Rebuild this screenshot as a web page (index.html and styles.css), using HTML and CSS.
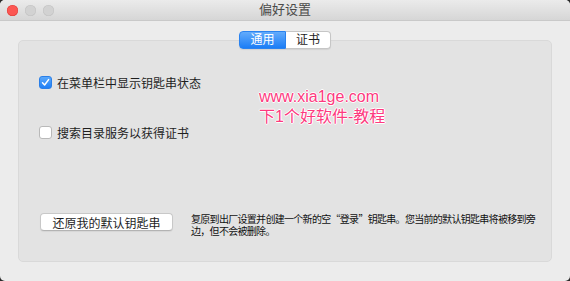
FILE: index.html
```html
<!DOCTYPE html>
<html lang="zh-CN">
<head>
    <meta charset="UTF-8">
    <title>偏好设置</title>
    <link rel="stylesheet" href="styles.css">
</head>
<body>
    <div class="window">
        <div class="titlebar">
            <div class="lights">
                <span class="light close"></span>
                <span class="light"></span>
                <span class="light"></span>
            </div>
            <div class="title">偏好设置</div>
            <div></div>
        </div>

        <div class="content">
            <div class="tabs">
                <span class="tab active">通用</span>
                <span class="tab">证书</span>
            </div>

            <div class="panel">
                <label class="row">
                    <span class="checkbox checked">
                        <svg width="9" height="9" viewBox="0 0 9 9"><path d="M1.5 4.8 L3.6 7 L7.6 1.6" fill="none" stroke="#fff" stroke-width="1.5" stroke-linecap="round" stroke-linejoin="round"/></svg>
                    </span>
                    在菜单栏中显示钥匙串状态
                </label>
                <label class="row second">
                    <span class="checkbox"></span>
                    搜索目录服务以获得证书
                </label>

                <div class="watermark">
                    <div>www.xia1ge.com</div>
                    <div>下1个好软件-教程</div>
                </div>

                <div class="reset">
                    <button class="btn">还原我的默认钥匙串</button>
                    <p class="desc">复原到出厂设置并创建一个新的空“登录”钥匙串。您当前的默认钥匙串将被移到旁边，但不会被删除。</p>
                </div>
            </div>
        </div>
    </div>
</body>
</html>
```

FILE: styles.css
```css
body {
    margin: 0;
    background: #2a2a2a;
    font-family: "Liberation Sans", "Noto Sans CJK SC", sans-serif;
    color: #1e1e1e;
}

.window {
    width: 570px;
    height: 281px;
    background: #ececec;
    border-radius: 5px;
    overflow: hidden;
    display: flex;
    flex-direction: column;
}

/* Title bar */
.titlebar {
    height: 20px;
    flex: none;
    border-bottom: 1px solid #c9c9c9;
    background: linear-gradient(#ebebeb, #d6d6d6);
    display: grid;
    grid-template-columns: 1fr auto 1fr;
    align-items: center;
}

.lights {
    display: flex;
    gap: 7px;
    padding-left: 7px;
}

.light {
    width: 11px;
    height: 11px;
    border-radius: 50%;
    background: #d2d2d2;
    box-shadow: inset 0 0 0 0.5px #c2c2c2;
}

.light.close {
    background: #fc5753;
    box-shadow: inset 0 0 0 0.5px #df3e3a;
}

.title {
    font-size: 13px;
    color: #4b4b4b;
    line-height: 20px;
}

/* Content */
.content {
    flex: 1;
    display: flex;
    flex-direction: column;
    padding: 10px 18px 19px;
}

.tabs {
    display: flex;
    justify-content: center;
    position: relative;
    z-index: 1;
    height: 18px;
}

.tab {
    width: 45px;
    height: 18px;
    box-sizing: border-box;
    font-size: 12px;
    line-height: 16px;
    text-align: center;
    background: #fff;
    border: 1px solid #c6c6c6;
    border-left: none;
    border-radius: 0 4px 4px 0;
    box-shadow: 0 1px 1px rgba(0, 0, 0, 0.08);
}

.tab.active {
    width: 47px;
    color: #fff;
    background: linear-gradient(#63abfb, #1b7df6);
    border: 1px solid #2a83f0;
    border-radius: 4px 0 0 4px;
}

.panel {
    flex: 1;
    margin-top: -9px;
    background: #e3e3e3;
    border: 1px solid #d9d9d9;
    border-radius: 5px;
    position: relative;
    display: flex;
    flex-direction: column;
    padding: 33px 20px 24px;
}

.row {
    display: flex;
    align-items: center;
    gap: 5px;
    height: 16px;
    font-size: 12px;
}

.row.second {
    margin-top: 34px;
}

.checkbox {
    width: 13px;
    height: 13px;
    box-sizing: border-box;
    border-radius: 3px;
    background: #fff;
    border: 1px solid #b9b9b9;
    display: flex;
    align-items: center;
    justify-content: center;
}

.checkbox.checked {
    background: linear-gradient(#5aa8fb, #1f7ff6);
    border-color: #2a7fe8;
}

/* Watermark overlay */
.watermark {
    position: absolute;
    left: 240px;
    top: 46px;
    font-size: 16px;
    line-height: 20px;
    color: #fd3a7e;
    text-shadow: 0 0 1px #fff, 1px 0 0 #fff, -1px 0 0 #fff, 0 1px 0 #fff, 0 -1px 0 #fff;
}

/* Reset row */
.reset {
    margin-top: auto;
    display: flex;
    align-items: flex-start;
}

.btn {
    flex: none;
    margin-left: 1px;
    width: 133px;
    height: 18px;
    padding: 0;
    font-family: inherit;
    font-size: 12px;
    color: #1e1e1e;
    background: #fff;
    border: 1px solid #c8c8c8;
    border-bottom-color: #b3b3b3;
    border-radius: 4px;
    box-shadow: 0 1px 1px rgba(0, 0, 0, 0.06);
}

.desc {
    flex: 1;
    margin: 0 -12px 0 18px;
    font-family: "Noto Sans CJK SC", sans-serif;
    font-size: 10px;
    line-height: 12px;
    letter-spacing: -0.7px;
    color: #111;
}
```
